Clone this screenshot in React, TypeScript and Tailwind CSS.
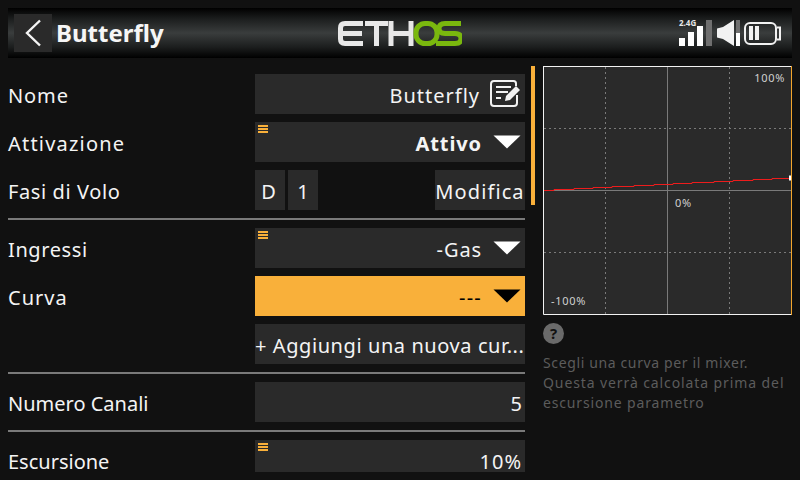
import React from "react";

const font = { fontFamily: '"Noto Sans", sans-serif' };

function Grip() {
  return (
    <div className="absolute left-[3px] top-[3px] flex w-[10px] flex-col gap-[1px]">
      <div className="h-[2px] bg-[#f9b03a]" />
      <div className="h-[2px] bg-[#f9b03a]" />
      <div className="h-[2px] bg-[#f9b03a]" />
    </div>
  );
}

function Caret({ color = "#ffffff" }: { color?: string }) {
  return (
    <svg width="28" height="14" viewBox="0 0 28 14" className="ml-[11px] mr-[1px] shrink-0">
      <path d="M0.5 0.5H27.5L14 13.5Z" fill={color} />
    </svg>
  );
}

function Row({
  label,
  tracking = "tracking-[0.6px]",
  height = "h-[40px]",
  offset = "mt-[4px]",
  children,
}: {
  label?: string;
  tracking?: string;
  height?: string;
  offset?: string;
  children: React.ReactNode;
}) {
  return (
    <div className={`flex items-center ${height}`}>
      <div className={`w-[247px] shrink-0 text-[20px] leading-[20px] text-[#f4f4f4] ${offset} ${tracking}`}>{label}</div>
      {children}
    </div>
  );
}

function Field({
  text,
  trailing,
  grip,
  offset = "mt-[4px]",
  className = "",
}: {
  text: string;
  trailing?: React.ReactNode;
  grip?: boolean;
  offset?: string;
  className?: string;
}) {
  return (
    <div className={`relative flex h-full w-[270px] items-center justify-end pr-[3px] text-[20px] leading-[20px] text-[#f4f4f4] ${className}`}>
      {grip && <Grip />}
      <span className={`whitespace-nowrap ${offset}`}>{text}</span>
      {trailing}
    </div>
  );
}

function Rule() {
  return <div className="my-[8px] h-[2px] w-[517px] bg-[#7a7a7a]" />;
}

function Logo() {
  return (
    <svg width="124" height="26" viewBox="0 0 124 26" fill="none">
      <g stroke="#e8e8e8" strokeWidth="5">
        <path d="M25 3.5H7Q2.5 3.5 2.5 8V19Q2.5 23.5 7 23.5H25M3 13.5H24" />
        <path d="M27 3.5H50M38.5 3.5V26" />
        <path d="M53 1V26M73 1V26M53 13.5H73" />
      </g>
      <g stroke="#7ab80e" strokeWidth="5">
        <rect x="78" y="3.5" width="21" height="20" rx="9" />
        <path d="M123 3.5H107Q101 3.5 101 8.5Q101 13.5 107 13.5H117Q123 13.5 123 18.5Q123 23.5 117 23.5H98" />
      </g>
    </svg>
  );
}

function StatusIcons() {
  return (
    <div className="relative mr-[11px] flex h-[26px] w-[102px] items-end">
      <span className="absolute left-0 top-[0px] text-[8px] font-bold leading-[6px] text-[#e8e8e8]">2.4G</span>
      <div className="flex items-end gap-[3px]">
        <div className="h-[8px] w-[6px] bg-white" />
        <div className="h-[14px] w-[6px] bg-white" />
        <div className="h-[20px] w-[6px] bg-white" />
        <div className="h-[26px] w-[6px] bg-[#6f6f6f]" />
      </div>
      <svg width="17" height="26" viewBox="0 0 17 26" className="ml-[5px] shrink-0">
        <path d="M0 8.5L6 7 17 0V26L6 19 0 17.5Z" fill="#f2f2f2" />
      </svg>
      <div className="ml-[2px] flex h-[26px] w-[4px] shrink-0 flex-col justify-end bg-[#6f6f6f]">
        <div className="h-[13px] bg-white" />
      </div>
      <svg width="37" height="23" viewBox="0 0 37 23" className="mb-[1px] ml-[4px] shrink-0">
        <rect x="1" y="1" width="31" height="21" rx="5" fill="none" stroke="#f2f2f2" strokeWidth="2" />
        <path d="M33 5.5H36V17.5H33" fill="none" stroke="#f2f2f2" strokeWidth="2" />
        <rect x="5" y="4" width="4" height="14" fill="#f2f2f2" />
        <rect x="11" y="4" width="4" height="14" fill="#f2f2f2" />
      </svg>
    </div>
  );
}

function Chart() {
  const ys = [190, 189, 188, 187, 186, 185, 184, 183, 182, 181, 180, 179, 178];
  const xs = [543, 554, 574, 593, 612, 634, 654, 673, 692, 714, 733, 753, 772, 790];
  let d = `M${xs[0]} ${ys[0] + 0.5}`;
  ys.forEach((y, i) => {
    d += `H${xs[i + 1]}`;
    if (i < ys.length - 1) d += `V${ys[i + 1] + 0.5}`;
  });
  return (
    <div className="relative h-[249px] w-[249px] text-[11px] leading-[14px] tracking-[0.7px] text-[#d0d0d0]">
      <svg width="249" height="249" viewBox="543 66 249 249" className="block">
        <rect x="543" y="66" width="249" height="249" fill="#2a2a2a" />
        <g stroke="#7a7a7a" strokeWidth="1">
          <path d="M605.5 67V314M729.5 67V314M544 128.5H791M544 252.5H791" strokeDasharray="2 3" />
          <path d="M667.5 67V314M544 190.5H791" />
        </g>
        <path d={d} fill="none" stroke="#ee1c1c" strokeWidth="1" />
        <rect x="789" y="175.5" width="3" height="5" fill="#fff" />
        <path d="M543.5 66V314.5H791" fill="none" stroke="#f2f2f2" />
        <path d="M543 66.5H791" fill="none" stroke="#f2f2f2" />
        <path d="M791.5 66V315" fill="none" stroke="#f2a52c" />
      </svg>
      <span className="absolute right-[7px] top-[5px]">100%</span>
      <span className="absolute left-[132px] top-[130px]">0%</span>
      <span className="absolute bottom-[7px] left-[8px]">-100%</span>
    </div>
  );
}

export default function App() {
  return (
    <div className="flex h-[480px] w-[800px] flex-col overflow-hidden bg-[#111111]" style={font}>
      <header className="mx-[8px] mt-[8px] flex h-[50px] shrink-0 items-center justify-between bg-[linear-gradient(180deg,#000000_0%,#1c1e1e_22%,#3a3d3d_50%,#1c1e1e_78%,#000000_100%)]">
        <div className="flex w-[300px] items-center">
          <div className="ml-[6px] flex h-[38px] w-[38px] items-center justify-center bg-[#2a2a2a]">
            <svg width="18" height="28" viewBox="0 0 18 28" fill="none">
              <path d="M16 1.5L3 14L16 26.5" stroke="#f4f4f4" strokeWidth="2.4" />
            </svg>
          </div>
          <span className="ml-[4px] text-[24px] font-bold leading-none text-[#f6f6f6]">Butterfly</span>
        </div>
        <Logo />
        <div className="flex w-[300px] justify-end">
          <StatusIcons />
        </div>
      </header>

      <main className="mt-[8px] flex min-h-0 flex-1 pb-[8px]">
        <section className="ml-[8px] w-[517px] shrink-0 pt-[8px]">
          <div className="flex flex-col gap-[8px]">
            <Row label="Nome" tracking="tracking-[0.9px]">
              <Field
                text="Butterfly"
                className="bg-[#2a2a2a] tracking-[1px]"
                trailing={
                  <svg width="32" height="28" viewBox="0 0 32 28" fill="none" className="ml-[10px] shrink-0" stroke="#f2f2f2" strokeWidth="2">
                    <path d="M26 6V3.5Q26 1 23.5 1H4Q1 1 1 4V23Q1 26 4 26H24Q27 26 27 23V15" />
                    <path d="M6 7H21M6 12H18M6 18H11" />
                    <path d="M15 21L16 16L26 6L30 10L20 20Z" fill="#f2f2f2" stroke="none" />
                  </svg>
                }
              />
            </Row>
            <Row label="Attivazione" tracking="tracking-[1.2px]">
              <Field text="Attivo" grip className="bg-[#2a2a2a] font-bold tracking-[0.9px]" trailing={<Caret />} />
            </Row>
            <Row label="Fasi di Volo">
              <div className="flex h-full w-[270px] gap-[3px] text-[20px] leading-[20px] text-[#f4f4f4]">
                <div className="flex w-[30px] items-center justify-center bg-[#2a2a2a] pr-[3px]">
                  <span className="mt-[4px]">D</span>
                </div>
                <div className="flex w-[30px] items-center justify-center bg-[#2a2a2a]">
                  <span className="mt-[4px]">1</span>
                </div>
                <div className="ml-auto flex w-[90px] items-center justify-center bg-[#2a2a2a] tracking-[1.1px]">
                  <span className="mt-[4px]">Modifica</span>
                </div>
              </div>
            </Row>
          </div>
          <Rule />
          <div className="flex flex-col gap-[8px]">
            <Row label="Ingressi">
              <Field text="-Gas" grip className="bg-[#2a2a2a] tracking-[0.9px]" trailing={<Caret />} />
            </Row>
            <Row label="Curva" tracking="tracking-[1px]">
              <Field text="---" className="bg-[#f9b03a] tracking-[1.2px] !text-black" trailing={<Caret color="#000000" />} />
            </Row>
            <Row>
              <Field text="+ Aggiungi una nuova cur..." className="justify-start bg-[#2a2a2a] tracking-[0.58px]" />
            </Row>
          </div>
          <Rule />
          <Row label="Numero Canali" tracking="tracking-[0px]">
            <Field text="5" className="bg-[#2a2a2a]" />
          </Row>
          <Rule />
          <Row label="Escursione" tracking="tracking-[0px]" height="h-[32px]" offset="mt-[12px]">
            <Field text="10%" grip offset="mt-[12px]" className="bg-[#2a2a2a] tracking-[1px]" />
          </Row>
        </section>

        <div className="ml-[6px] h-[139px] w-[4px] shrink-0 bg-[#f9b03a]" />

        <aside className="ml-[8px] w-[249px] shrink-0">
          <Chart />
          <div className="mt-[8px] flex h-[21px] w-[21px] items-center justify-center rounded-full bg-[#6a6a6a] text-[15px] font-bold leading-none text-[#111111]">?</div>
          <p className="mt-[9px] text-[14px] leading-[20px] text-[#5c5c5c]">
            <span className="block tracking-[0.63px]">Scegli una curva per il mixer.</span>
            <span className="block tracking-[0.9px]">Questa verrà calcolata prima del</span>
            <span className="block tracking-[0.85px]">escursione parametro</span>
          </p>
        </aside>
      </main>
    </div>
  );
}
